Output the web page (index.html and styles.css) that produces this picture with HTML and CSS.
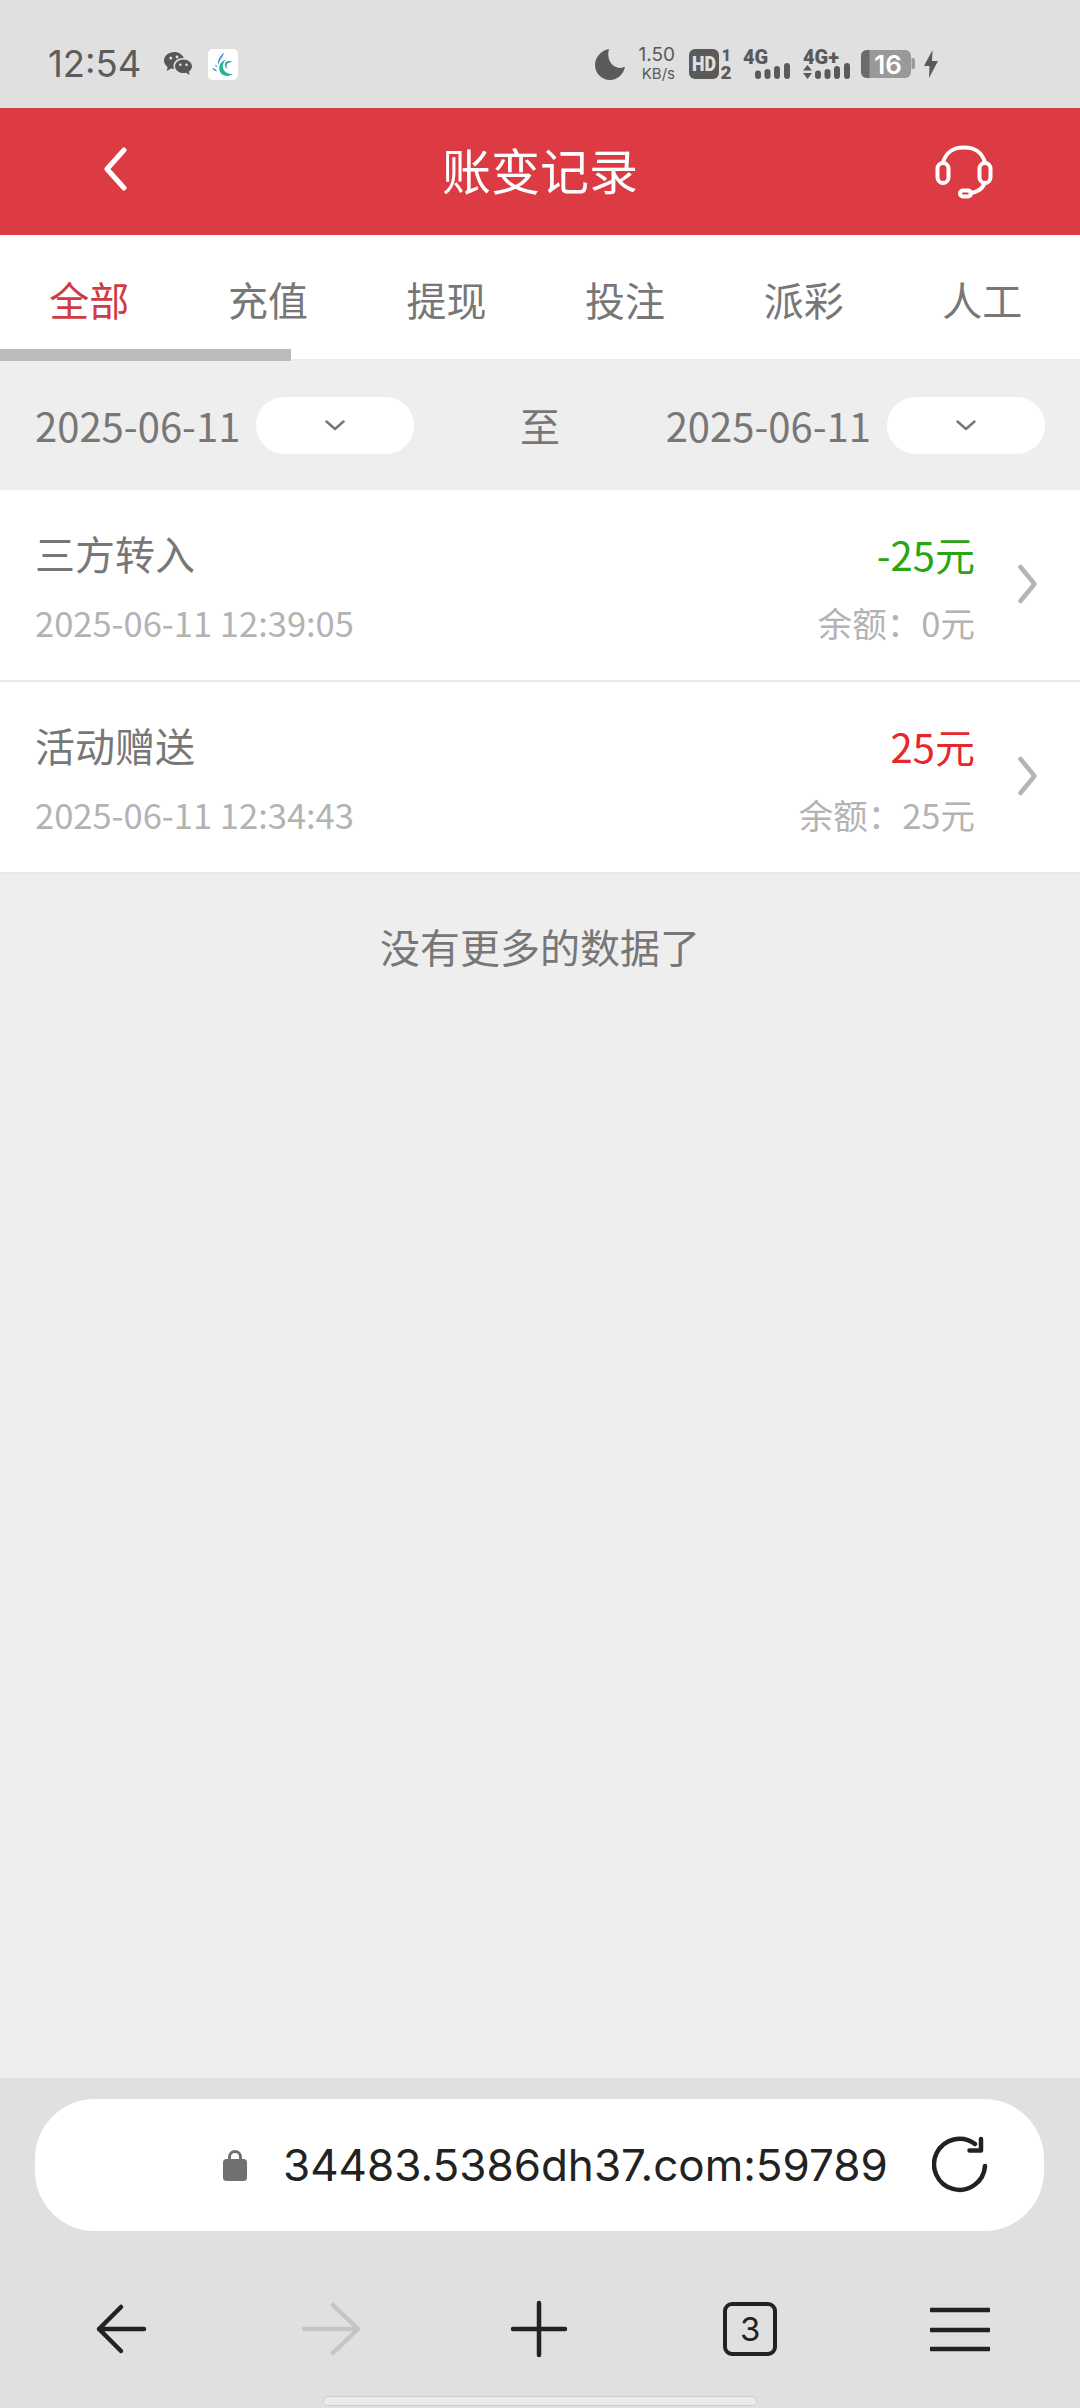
FILE: index.html
```html
<!DOCTYPE html>
<html lang="zh-CN">
<head>
<meta charset="utf-8">
<title>账变记录</title>
<link rel="stylesheet" href="styles.css">
</head>
<body>
<div class="phone">
  <div class="status">
    <div class="status-left">
      <span class="clock">12:54</span>
      <svg class="ic-wechat" width="28" height="24" viewBox="0 0 28 24"><path fill="#565656" d="M10.5 0C4.7 0 0 3.8 0 8.5c0 2.6 1.4 4.8 3.6 6.4L2.8 19l4.3-2.4c1 .3 2 .4 3 .4-.4-1-.6-1.9-.6-2.9 0-4.700 4.300-8 9.500-8 .3 0 .5 0 .8 0C18.600 2.600 14.900 0 10.500 0z"/><path fill="#565656" d="M19.500 7.500c-4.600 0-8.500 3-8.500 6.800s3.900 6.800 8.500 6.800c.9 0 1.700-.1 2.500-.3l3.700 2.200-.9-3.500c1.900-1.200 3.200-3.100 3.200-5.200 0-3.800-3.900-6.800-8.500-6.800z"/><circle cx="6.800" cy="6" r="1.500" fill="#e0e0e0"/><circle cx="13" cy="5" r="1.400" fill="#e0e0e0"/><circle cx="16.300" cy="12.800" r="1.300" fill="#e0e0e0"/><circle cx="22.500" cy="12.800" r="1.300" fill="#e0e0e0"/></svg>
      <svg class="ic-app" width="30" height="31" viewBox="0 0 30 31"><rect width="30" height="31" rx="5" fill="#fff"/><path fill="#1fb68f" d="M25 25c-5 3.500-12 2-13.500-3.500C10.300 17 13 12 18 10.500c-3 3-4 6.500-2.800 9.500 1.400 3.400 5.800 5.500 9.800 5z"/><path fill="#2c9fb0" d="M24.500 13.500c-2.800-1-5.400.3-6 2.800-.3 1.500.3 3 1.500 4-2.800-1-3.800-3.700-2.800-6 1-2.300 4.600-3.200 7.300-.8z"/><path fill="#4d8fd6" d="M16 3.500c-.5 3-2.500 5.500-4 8-1 1.600-1.600 3-1.800 4.500-1.300-3.500 1.500-9 5.800-12.500z"/><path fill="#4d8fd6" d="M4 19c2 .2 4 1.300 5.200 3.300-2.200 0-4.200-1.300-5.200-3.300zM8 15.500l1.500 2.800-2.500-1z"/></svg>
    </div>
    <div class="status-right">
      <svg class="ic-moon" width="30" height="31" viewBox="0 0 30 31"><path fill="#5a5a5a" d="M14 0C12 7 14 15 21 18c3.500 1.400 6.500 1 9-.2C28.500 25.500 22.500 31 15 31 6.700 31 0 24.300 0 16 0 8.500 6 1.500 14 0z"/></svg>
      <div class="speed"><span class="speed-num">1.50</span><span class="speed-unit">KB/s</span></div>
      <svg class="ic-hd" width="43" height="30" viewBox="0 0 43 30"><rect width="30" height="30" rx="6" fill="#5a5a5a"/><text x="15" y="22" class="hd-text" text-anchor="middle" textLength="24" lengthAdjust="spacingAndGlyphs">HD</text><text x="37.500" y="12" class="sim-text" text-anchor="middle">1</text><text x="37" y="30" class="sim-text sim-two" text-anchor="middle">2</text></svg>
      <svg class="ic-net" width="47" height="30" viewBox="0 0 47 30"><text x="0" y="15" class="net-text">4G</text><rect x="12" y="21.500" width="6" height="8.500" rx="3" fill="#5a5a5a"/><rect x="21.500" y="20" width="6" height="10" rx="3" fill="#5a5a5a"/><rect x="31" y="17" width="6" height="13" rx="3" fill="#5a5a5a"/><rect x="41" y="14" width="6" height="16" rx="3" fill="#5a5a5a"/></svg>
      <svg class="ic-net" width="47" height="30" viewBox="0 0 47 30"><text x="0" y="15" class="net-text">4G+</text><path fill="#5a5a5a" d="M4.500 16l4.500 5.500H0zM0 24h9l-4.500 6z"/><rect x="12" y="21.500" width="6" height="8.500" rx="3" fill="#5a5a5a"/><rect x="21.500" y="20" width="6" height="10" rx="3" fill="#5a5a5a"/><rect x="31" y="17" width="6" height="13" rx="3" fill="#5a5a5a"/><rect x="41" y="14" width="6" height="16" rx="3" fill="#5a5a5a"/></svg>
      <svg class="ic-batt" width="54" height="28" viewBox="0 0 54 28"><rect x="0" y="0" width="50" height="28" rx="6" fill="#999"/><path fill="#6b6b6b" d="M6 0h2.500v28H6a6 6 0 0 1-6-6V6a6 6 0 0 1 6-6z"/><path fill="#999" d="M50.500 8h1a2.500 2.500 0 0 1 2.500 2.500v6a2.500 2.500 0 0 1-2.500 2.500h-1z"/><text x="27" y="24" class="batt-text" text-anchor="middle">16</text></svg>
      <svg class="ic-bolt" width="14" height="28" viewBox="0 0 14 28"><path fill="#5a5a5a" d="M8.500 0L0 16h5.500L5 28l9-17H8z"/></svg>
    </div>
  </div>

  <header class="head">
    <svg class="head-back" width="24" height="44" viewBox="0 0 24 44"><path d="M21 3L4 22l17 19" fill="none" stroke="#fff" stroke-width="5" stroke-linecap="round" stroke-linejoin="round"/></svg>
    <h1 class="head-title">账变记录</h1>
    <svg class="head-help" width="58" height="54" viewBox="0 0 58 54"><g fill="none" stroke="#fff" stroke-width="4" stroke-linecap="round"><path d="M8 18C10 8 18 2.500 29 2.500S48 8 50 18"/><rect x="2.500" y="18" width="11" height="20" rx="5.500"/><rect x="44.500" y="18" width="11" height="20" rx="5.500"/><path d="M49.500 38c-2 6-8 9.500-14 10"/><rect x="25" y="45.500" width="11" height="6" rx="3"/></g></svg>
  </header>

  <nav class="tabs">
    <span class="tab tab-on">全部</span>
    <span class="tab">充值</span>
    <span class="tab">提现</span>
    <span class="tab">投注</span>
    <span class="tab">派彩</span>
    <span class="tab">人工</span>
    <span class="tab-bar"></span>
  </nav>

  <div class="filter">
    <div class="range">
      <span class="range-date">2025-06-11</span>
      <span class="pick"><svg width="20" height="11" viewBox="0 0 20 11"><path d="M1.500 1.500L10 9l8.500-7.500" fill="none" stroke="#777" stroke-width="2.500" stroke-linecap="round" stroke-linejoin="round"/></svg></span>
    </div>
    <span class="range-to">至</span>
    <div class="range">
      <span class="range-date">2025-06-11</span>
      <span class="pick"><svg width="20" height="11" viewBox="0 0 20 11"><path d="M1.500 1.500L10 9l8.500-7.500" fill="none" stroke="#777" stroke-width="2.500" stroke-linecap="round" stroke-linejoin="round"/></svg></span>
    </div>
  </div>

  <main class="list">
    <article class="row">
      <div class="row-left">
        <div class="row-name">三方转入</div>
        <div class="row-time">2025-06-11 12:39:05</div>
      </div>
      <div class="row-right">
        <div class="row-amt amt-out">-25元</div>
        <div class="row-bal">余额：0元</div>
      </div>
      <svg class="row-arrow" width="19" height="40" viewBox="0 0 19 40"><path d="M2.500 3L16.500 20 2.500 37" fill="none" stroke="#b5b5b5" stroke-width="4.500" stroke-linecap="round" stroke-linejoin="round"/></svg>
    </article>
    <article class="row">
      <div class="row-left">
        <div class="row-name">活动赠送</div>
        <div class="row-time">2025-06-11 12:34:43</div>
      </div>
      <div class="row-right">
        <div class="row-amt amt-in">25元</div>
        <div class="row-bal">余额：25元</div>
      </div>
      <svg class="row-arrow" width="19" height="40" viewBox="0 0 19 40"><path d="M2.500 3L16.500 20 2.500 37" fill="none" stroke="#b5b5b5" stroke-width="4.500" stroke-linecap="round" stroke-linejoin="round"/></svg>
    </article>
    <p class="list-end">没有更多的数据了</p>
  </main>

  <footer class="browser">
    <div class="url">
      <svg class="url-lock" width="24" height="31" viewBox="0 0 24 31"><rect y="9" width="24" height="22" rx="3.500" fill="#707070"/><path d="M6.500 11V7a5.500 5.500 0 0 1 11 0v4" fill="none" stroke="#707070" stroke-width="3"/></svg>
      <span class="url-text">34483.5386dh37.com:59789</span>
      <svg class="url-reload" width="56" height="58" viewBox="0 0 56 58"><g fill="none" stroke="#222" stroke-width="4.500" stroke-linecap="round" stroke-linejoin="round"><path d="M53 30a25.500 25.500 0 1 1-10-22"/><path d="M49 3v11.500H37.500"/></g></svg>
    </div>
    <div class="bnav">
      <svg width="60" height="60" viewBox="0 0 60 60"><path d="M30 8L8 30l22 22M8 30h45" fill="none" stroke="#222" stroke-width="4.500" stroke-linecap="round" stroke-linejoin="round"/></svg>
      <svg width="60" height="60" viewBox="0 0 60 60"><path d="M32 6l25 24-25 24M57 30H3" fill="none" stroke="#c5c5c5" stroke-width="4.500" stroke-linecap="round" stroke-linejoin="round"/></svg>
      <svg width="60" height="60" viewBox="0 0 60 60"><path d="M29 4v52M3 30h52" fill="none" stroke="#222" stroke-width="4.500" stroke-linecap="round"/></svg>
      <span class="bnav-tabs">3</span>
      <svg width="60" height="60" viewBox="0 0 60 60"><path d="M1 11h58M1 31h58M1 50h58" fill="none" stroke="#222" stroke-width="4.500" stroke-linecap="round"/></svg>
    </div>
    <div class="home"></div>
  </footer>
</div>
</body>
</html>
```
FILE: styles.css
```css
* { box-sizing: border-box; margin: 0; padding: 0; }
html, body { width: 1080px; height: 2408px; overflow: hidden; }
body { font-family: "Noto Sans CJK SC", "Noto Sans", sans-serif; background: #eee; color: #777; }
.phone { width: 1080px; height: 2408px; display: flex; flex-direction: column; }

.status { height: 108px; background: #e0e0e0; display: flex; align-items: center; justify-content: space-between; padding: 20px 142px 0 48px; flex: none; }
.status-left { display: flex; align-items: center; }
.status svg { overflow: visible; }
.clock { font-family: Inter, sans-serif; font-size: 36.500px; line-height: 44px; color: #5c5c5c; width: 116px; }
.ic-wechat { margin-right: 16px; }
.status-right { display: flex; align-items: center; }
.ic-moon { margin-right: 13px; }
.speed { display: flex; flex-direction: column; align-items: flex-end; gap: 2px; width: 37px; margin: -3px 14px 0 0; font-family: Inter, sans-serif; color: #5a5a5a; }
.speed-num { font-size: 19px; line-height: 19px; }
.speed-unit { font-size: 15px; line-height: 15px; }
.ic-hd { margin-right: 11px; }
.ic-net { margin-right: 13px; }
.ic-net + .ic-net { margin-right: 11px; }
.ic-batt { margin-right: 9px; }
.hd-text { font-family: Roboto, sans-serif; font-weight: 900; font-size: 20px; fill: #e0e0e0; }
.sim-text { font-family: Roboto, sans-serif; font-weight: 900; font-size: 16px; fill: #5a5a5a; }
.sim-two { font-size: 19px; }
.net-text { font-family: Roboto, sans-serif; font-weight: 900; font-size: 20px; fill: #5a5a5a; }
.batt-text { font-family: Inter, sans-serif; font-weight: 600; font-size: 26px; fill: #fff; }

.head { height: 127px; flex: none; background: #dc3b44; display: grid; grid-template-columns: 1fr auto 1fr; align-items: center; padding: 0 87px; }
.head-title { font-size: 49px; line-height: 60px; font-weight: 400; color: #fff; margin-top: -5px; }
.head-back { justify-self: start; margin: -5px 0 0 16px; }
.head-help { justify-self: end; margin-top: 1px; }

.tabs { position: relative; height: 126px; flex: none; background: #fff; border-bottom: 2px solid #ececec; display: flex; padding: 41px 8px 0 0; }
.tab { width: 178.600px; text-align: center; font-size: 40px; line-height: 46px; color: #777; }
.tab-on { color: #cf3a44; }
.tab-bar { position: absolute; left: 0; bottom: -2px; width: 291px; height: 12px; background: #bbb; }

.filter { height: 129px; flex: none; background: #eee; display: flex; align-items: center; justify-content: space-between; padding: 0 35px; }
.range { display: flex; align-items: center; gap: 16px; }
.range-date { font-size: 40px; line-height: 46px; color: #777; margin-top: -1px; }
.range-to { font-size: 40px; line-height: 46px; color: #777; margin-top: -1px; }
.pick { width: 158px; height: 57px; border-radius: 28.500px; background: #fff; display: flex; align-items: center; justify-content: center; }

.list { flex: 1; }
.row { height: 192px; background: #fff; border-bottom: 2px solid #e9e9e9; display: flex; padding: 39px 0 0 35px; }
.row-left { flex: 1; }
.row-name { font-size: 40px; line-height: 46px; margin-top: 1px; color: #777; }
.row-time { font-size: 34.500px; line-height: 46px; margin-top: 23px; color: #b3b3b3; }
.row-right { text-align: right; }
.row-amt { font-size: 40px; line-height: 46px; margin-top: 2px; }
.amt-out { color: #2aa614; }
.amt-in { color: #e8262d; }
.row-bal { font-size: 34.500px; line-height: 46px; margin-top: 22px; color: #b3b3b3; }
.row-arrow { margin: 35px 43px 0 43px; }
.list-end { text-align: center; font-size: 40px; line-height: 46px; margin-top: 49px; color: #777; }

.browser { height: 330px; flex: none; background: #e0e0e0; padding-top: 21px; display: flex; flex-direction: column; }
.url { height: 132px; flex: none; margin: 0 36px 0 35px; background: #fff; border-radius: 60px; display: flex; align-items: center; padding: 0 56px 0 188px; color: #222; }
.url-lock { margin-right: 36px; }
.url-text { font-family: Inter, sans-serif; font-size: 44px; line-height: 56px; color: #222; flex: 1; white-space: nowrap; }
.bnav { height: 132px; flex: none; margin-top: 32px; display: grid; grid-template-columns: repeat(5, 209.800px); justify-items: center; align-items: center; padding-left: 16px; }
.bnav-tabs { width: 54px; height: 54px; border: 4.500px solid #222; border-radius: 9px; display: flex; align-items: center; justify-content: center; font-family: Inter, sans-serif; font-size: 33px; color: #222; }
.home { width: 432px; height: 8px; margin: 2px auto 0; border-radius: 4px; background: #ebebeb; box-shadow: 0 0 0 1px #cfcfcf; }
```
